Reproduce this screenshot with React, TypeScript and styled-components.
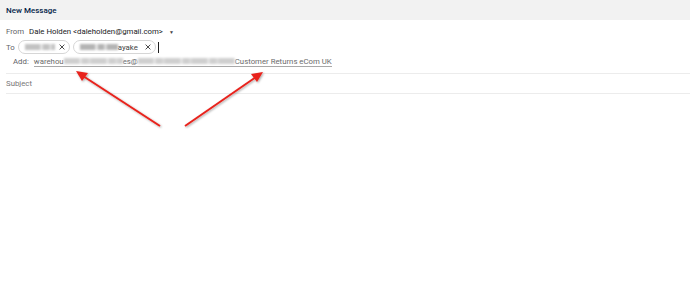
import React from "react";
import styled, { createGlobalStyle } from "styled-components";

const GlobalStyle = createGlobalStyle`
  html, body { margin: 0; padding: 0; background: #ffffff; }
  body { font-family: Roboto, "Liberation Sans", sans-serif; }
`;

const Page = styled.div`
  position: relative;
  width: 690px;
  height: 286px;
  overflow: hidden;
  background: #ffffff;
`;

const Header = styled.div`
  height: 20px;
  display: flex;
  align-items: center;
  padding-left: 6px;
  background: #f2f2f2;
  color: #041e49;
  font-size: 8px;
  font-weight: 500;
`;

const Fields = styled.div`
  padding: 4px 0 0 6px;
`;

const Row = styled.div<{ $h: number; $indent?: number; $pb?: number }>`
  height: ${(p) => p.$h}px;
  box-sizing: border-box;
  display: flex;
  align-items: center;
  gap: 3px;
  padding-left: ${(p) => p.$indent ?? 0}px;
  padding-bottom: ${(p) => p.$pb ?? 0}px;
  font-size: 7.8px;
  color: #202124;
  white-space: nowrap;
`;

const AddRow = styled(Row)`
  border-bottom: 1px solid #ececec;
`;

const Label = styled.span<{ $mr?: number }>`
  color: #5f6368;
  margin-right: ${(p) => p.$mr ?? 2}px;
`;

const Caret = styled.span`
  font-size: 5px;
  color: #444;
  margin-left: 3px;
`;

const Chip = styled.span<{ $w: number }>`
  display: inline-flex;
  align-items: center;
  justify-content: space-between;
  box-sizing: border-box;
  width: ${(p) => p.$w}px;
  height: 14px;
  padding: 0 3px 0 6px;
  border: 1px solid #d6d6d6;
  border-radius: 7px;
  color: #444;
`;

const ChipText = styled.span`
  display: inline-flex;
  align-items: center;
`;

/* redacted (blurred) part of an address */
const Blur = styled.span<{ $w: number; $tone?: string }>`
  display: inline-block;
  width: ${(p) => p.$w}px;
  height: 6px;
  background: repeating-linear-gradient(
    90deg,
    ${(p) => p.$tone ?? "#cfcfcf"} 0 15px,
    #e2e2e2 15px 18px,
    ${(p) => p.$tone ?? "#cfcfcf"} 18px 24px,
    #dadada 24px 27px
  );
  filter: blur(1.2px);
`;

const Close = styled.svg`
  width: 8px;
  height: 8px;
`;

const Cursor = styled.span`
  width: 1px;
  height: 11px;
  background: #1f1f1f;
  margin-left: -1px;
`;

const Link = styled.span`
  display: inline-flex;
  align-items: center;
  color: #6b6b6b;
  line-height: 9px;
  border-bottom: 1px solid #a8a8a8;
`;

const Subject = styled.div`
  height: 19px;
  display: flex;
  align-items: center;
  border-bottom: 1px solid #ececec;
  font-size: 7.8px;
  color: #777;
`;

const Arrows = styled.svg`
  position: absolute;
  left: 0;
  top: 0;
  pointer-events: none;
`;

const X = () => (
  <Close viewBox="0 0 10 10">
    <path d="M2 2L8 8M8 2L2 8" stroke="#444" strokeWidth="1.2" />
  </Close>
);

export default function App() {
  return (
    <Page>
      <GlobalStyle />
      <Header>New Message</Header>
      <Fields>
        <Row $h={15}>
          <Label>From</Label>
          <span>Dale Holden &lt;daleholden@gmail.com&gt;</span>
          <Caret>▼</Caret>
        </Row>
        <Row $h={16}>
          <Label $mr={0}>To</Label>
          <Chip $w={52}>
            <Blur $w={30} $tone="#c2c2c2" />
            <X />
          </Chip>
          <Chip $w={83}>
            <ChipText>
              <Blur $w={38} $tone="#b4b4b4" />
              ayake
            </ChipText>
            <X />
          </Chip>
          <Cursor />
        </Row>
        <AddRow $h={19} $indent={7} $pb={5}>
          <Label>Add:</Label>
          <Link>
            warehou
            <Blur $w={59} />
            es@
            <Blur $w={97} />
            Customer Returns eCom UK
          </Link>
        </AddRow>
        <Subject>Subject</Subject>
      </Fields>
      <Arrows width="690" height="286" viewBox="0 0 690 286">
        <defs>
          <filter id="sh" x="-20%" y="-20%" width="140%" height="140%">
            <feDropShadow dx="1" dy="1" stdDeviation="0.8" floodColor="#000" floodOpacity="0.35" />
          </filter>
        </defs>
        <g filter="url(#sh)" fill="#e8221b" stroke="#e8221b">
          <line x1="160" y1="126" x2="83" y2="76" strokeWidth="2" />
          <polygon points="76,71 88,73 82,81" stroke="none" />
          <line x1="185" y1="126" x2="256" y2="77" strokeWidth="2" />
          <polygon points="263,72 251,74 257,82" stroke="none" />
        </g>
      </Arrows>
    </Page>
  );
}
